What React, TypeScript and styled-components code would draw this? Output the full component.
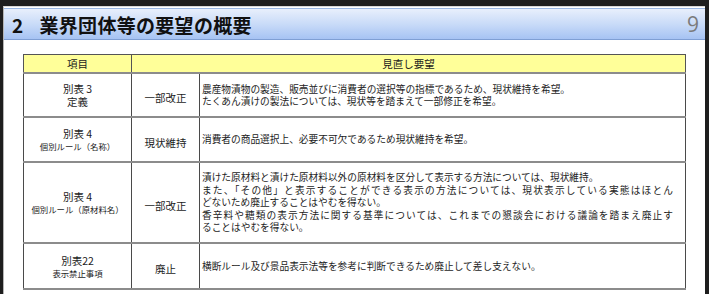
import React from 'react'
import styled, { createGlobalStyle } from 'styled-components'

const GlobalStyle = createGlobalStyle`
  html, body {
    margin: 0;
    padding: 0;
    background: #1e1e1e;
    overflow: hidden;
  }
`

const Slide = styled.div`
  margin: 6px 4px 0 3px;
  height: 300px;
  background: #ffffff;
  border-left: 1px solid #b5b5b5;
  border-top: 1px solid #d8d8d8;
  padding-top: 1px;
  box-sizing: border-box;
`

const TitleBar = styled.header`
  display: flex;
  align-items: center;
  justify-content: space-between;
  height: 30px;
  padding: 0 6px 0 8px;
  background: linear-gradient(to bottom, #e8effc 0%, #c9dbf8 50%, #a6c3f3 100%);
  border-top: 1px solid #9ab7e3;
  border-bottom: 1px solid #7f9fd4;
`

const Title = styled.h1`
  display: flex;
  align-items: center;
  gap: 16px;
  margin: 0;
  font-family: 'Noto Sans CJK JP', 'Noto Sans', sans-serif;
  font-size: 19px;
  font-weight: 700;
  color: #111;
  letter-spacing: 0.3px;
`

const PageNo = styled.span`
  font-family: 'Open Sans', 'Liberation Sans', sans-serif;
  font-size: 21px;
  color: #7b7b7b;
  line-height: 1;
`

const Content = styled.div`
  padding: 14px 0 0 19px;
`

const Table = styled.table`
  width: 662px;
  table-layout: fixed;
  border-collapse: collapse;
  font-family: 'Noto Sans CJK JP', 'Noto Sans', sans-serif;
  color: #1c1c1c;
`

const HeadCell = styled.th`
  height: 17px;
  padding: 0;
  background: #ffff99;
  border: 1px solid #555;
  border-bottom: 2px solid #8c8c8c;
  font-size: 10.5px;
  font-weight: 400;
  line-height: 14px;
  text-align: center;
`

const Row = styled.tr<{ $h: number }>`
  height: ${(p) => p.$h}px;
`

const Cell = styled.td<{ $align?: 'center' | 'left' }>`
  padding: 0;
  border-left: 1px solid #4a4a4a;
  border-right: 1px solid #4a4a4a;
  border-bottom: 2px solid #8c8c8c;
  text-align: ${(p) => p.$align ?? 'center'};
  vertical-align: middle;
`

const TextCell = styled(Cell)`
  padding: 0 12px 0 2px;
  font-size: 9.7px;
  line-height: 12.4px;
`

const Main = styled.div`
  font-size: 10.5px;
  line-height: 13px;
`

const Sub = styled.div`
  font-size: 8.4px;
  line-height: 12px;
`

const Kind = styled.span`
  font-size: 10.5px;
`

const Line = styled.div<{ $justify?: boolean }>`
  white-space: nowrap;
  text-align: ${(p) => (p.$justify ? 'justify' : 'left')};
  text-align-last: ${(p) => (p.$justify ? 'justify' : 'left')};
  ${(p) => (p.$justify ? 'white-space: normal;' : '')}
`

type Item = {
  main: string
  sub: string
  kind: string
  height: number
  lines: { text: string; justify?: boolean }[]
}

const items: Item[] = [
  {
    main: '別表 3',
    sub: '',
    kind: '一部改正',
    height: 44,
    lines: [
      { text: '農産物漬物の製造、販売並びに消費者の選択等の指標であるため、現状維持を希望。' },
      { text: 'たくあん漬けの製法については、現状等を踏まえて一部修正を希望。' },
    ],
  },
  {
    main: '別表 4',
    sub: '個別ルール（名称）',
    kind: '現状維持',
    height: 45,
    lines: [{ text: '消費者の商品選択上、必要不可欠であるため現状維持を希望。' }],
  },
  {
    main: '別表 4',
    sub: '個別ルール（原材料名）',
    kind: '一部改正',
    height: 81,
    lines: [
      { text: '漬けた原材料と漬けた原材料以外の原材料を区分して表示する方法については、現状維持。' },
      {
        text: 'また、「その他」と表示することができる表示の方法については、現状表示している実態はほとん',
        justify: true,
      },
      { text: 'どないため廃止することはやむを得ない。' },
      {
        text: '香辛料や糖類の表示方法に関する基準については、これまでの懇談会における議論を踏まえ廃止す',
        justify: true,
      },
      { text: 'ることはやむを得ない。' },
    ],
  },
  {
    main: '別表22',
    sub: '表示禁止事項',
    kind: '廃止',
    height: 46,
    lines: [{ text: '横断ルール及び景品表示法等を参考に判断できるため廃止して差し支えない。' }],
  },
]

export default function App() {
  return (
    <>
      <GlobalStyle />
      <Slide>
        <TitleBar>
          <Title>
            <span>2</span>
            <span>業界団体等の要望の概要</span>
          </Title>
          <PageNo>9</PageNo>
        </TitleBar>
        <Content>
          <Table>
            <colgroup>
              <col style={{ width: 108 }} />
              <col style={{ width: 68 }} />
              <col style={{ width: 486 }} />
            </colgroup>
            <thead>
              <tr>
                <HeadCell>項目</HeadCell>
                <HeadCell colSpan={2}>見直し要望</HeadCell>
              </tr>
            </thead>
            <tbody>
              {items.map((item, i) => (
                <Row key={i} $h={item.height}>
                  <Cell>
                    <Main>{item.main}</Main>
                    {i === 0 ? <Main>定義</Main> : <Sub>{item.sub}</Sub>}
                  </Cell>
                  <Cell>
                    <Kind>{item.kind}</Kind>
                  </Cell>
                  <TextCell $align="left">
                    {item.lines.map((l, j) => (
                      <Line key={j} $justify={l.justify}>
                        {l.text}
                      </Line>
                    ))}
                  </TextCell>
                </Row>
              ))}
            </tbody>
          </Table>
        </Content>
      </Slide>
    </>
  )
}
